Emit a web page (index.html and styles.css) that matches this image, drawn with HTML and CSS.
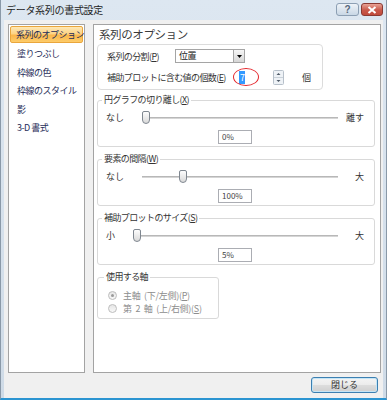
FILE: index.html
```html
<!DOCTYPE html>
<html>

<head>
    <title>データ系列の書式設定</title>
    <meta name="viewport" content="width=device-width, initial-scale=1">
    <link rel="stylesheet" href="styles.css">
</head>

<body>

    <div class="window">
        <div class="titlebar">
            <span class="title">データ系列の書式設定</span>
            <div class="caption-buttons">
                <span class="cap-btn help">?</span>
                <span class="cap-btn close">
                    <svg width="10" height="8" viewBox="0 0 10 8">
                        <path d="M1.5 1 L8.5 7 M8.5 1 L1.5 7" stroke="#fff" stroke-width="2" fill="none" />
                    </svg>
                </span>
            </div>
        </div>

        <div class="content">
            <div class="panels">
                <ul class="nav">
                    <li class="active">系列のオプション</li>
                    <li>塗りつぶし</li>
                    <li>枠線の色</li>
                    <li>枠線のスタイル</li>
                    <li>影</li>
                    <li>3-D 書式</li>
                </ul>

                <div class="options">
                    <h2>系列のオプション</h2>

                    <div class="group">
                        <div class="row">
                            <label class="lbl-split">系列の分割(<u>P</u>)</label>
                            <div class="select">
                                <span class="select-text">位置</span>
                                <span class="select-btn">
                                    <svg width="9" height="12" viewBox="0 0 9 12">
                                        <path d="M2 5 L7 5 L4.5 8 Z" fill="#000" />
                                    </svg>
                                </span>
                            </div>
                        </div>
                        <div class="row">
                            <label class="lbl-count">補助プロットに含む値の個数(<u>E</u>)</label>
                            <div class="spin">
                                <span class="spin-value"><span class="sel">7</span></span>
                                <span class="spin-btns">
                                    <svg width="11" height="15" viewBox="0 0 11 15">
                                        <rect x="0.5" y="0.5" width="10" height="14" rx="1" fill="#eef2f6" stroke="#b7c0ca" />
                                        <line x1="1" y1="7.5" x2="10" y2="7.5" stroke="#c9d1d9" />
                                        <path d="M3.5 5 L7.5 5 L5.5 3 Z" fill="#4d5866" />
                                        <path d="M3.5 10 L7.5 10 L5.5 12 Z" fill="#4d5866" />
                                    </svg>
                                </span>
                                <span class="mark"></span>
                            </div>
                            <span class="unit">個</span>
                        </div>
                    </div>

                    <fieldset class="box">
                        <legend>円グラフの切り離し(<u>X</u>)</legend>
                        <div class="slider-row">
                            <span class="end">なし</span>
                            <div class="track"><span class="thumb" style="left: 0%"></span></div>
                            <span class="end-right">離す</span>
                        </div>
                        <div class="value-box">0%</div>
                    </fieldset>

                    <fieldset class="box">
                        <legend>要素の間隔(<u>W</u>)</legend>
                        <div class="slider-row">
                            <span class="end">なし</span>
                            <div class="track"><span class="thumb" style="left: 19%"></span></div>
                            <span class="end-right">大</span>
                        </div>
                        <div class="value-box">100%</div>
                    </fieldset>

                    <fieldset class="box">
                        <legend>補助プロットのサイズ(<u>S</u>)</legend>
                        <div class="slider-row">
                            <span class="end">小</span>
                            <div class="track"><span class="thumb" style="left: 0%"></span></div>
                            <span class="end-right">大</span>
                        </div>
                        <div class="value-box">5%</div>
                    </fieldset>

                    <fieldset class="box axis">
                        <legend>使用する軸</legend>
                        <div class="radio-row">
                            <span class="radio checked"></span>
                            <span>主軸 (下/左側)(<u>P</u>)</span>
                        </div>
                        <div class="radio-row">
                            <span class="radio"></span>
                            <span>第 2 軸 (上/右側)(<u>S</u>)</span>
                        </div>
                    </fieldset>
                </div>
            </div>

            <div class="footer">
                <button type="button" class="close-button">閉じる</button>
            </div>
        </div>
    </div>

</body>

</html>
```

FILE: styles.css
```css
body {
    margin: 0;
    font-family: "Noto Sans CJK JP", "Noto Sans", sans-serif;
    font-size: 9px;
    color: #333;
}

.window {
    width: 387px;
    height: 400px;
    box-sizing: border-box;
    display: flex;
    flex-direction: column;
    padding: 0 3px;
    background: linear-gradient(#dde7f1, #cfdbe7);
    border-left: 1px solid #8a99a8;
    border-right: 1px solid #8a99a8;
    border-bottom: 2px solid #2b94d1;
}

/* title bar */
.titlebar {
    height: 20px;
    flex-shrink: 0;
    display: flex;
    justify-content: space-between;
}

.title {
    padding-left: 2px;
    line-height: 20px;
    font-size: 10px;
    letter-spacing: -0.3px;
    color: #1e1e1e;
}

.caption-buttons {
    display: flex;
    gap: 2px;
    margin-top: 3px;
}

.cap-btn {
    height: 13px;
    box-sizing: border-box;
    border-radius: 3px;
    display: flex;
    align-items: center;
    justify-content: center;
}

.help {
    width: 23px;
    border: 1px solid #8c9fb3;
    background: linear-gradient(#eef3f8, #c9d7e5);
    color: #56677a;
    font-family: "Liberation Sans", sans-serif;
    font-weight: bold;
    font-size: 10px;
}

.close {
    width: 22px;
    border: 1px solid #8a3a33;
    background: linear-gradient(#e9a396, #c9594a 55%, #c14b3c);
}

/* dialog body */
.content {
    flex: 1;
    display: flex;
    flex-direction: column;
    background: #f0f0f0;
    padding: 4px 2px 0 4px;
}

.panels {
    display: flex;
    gap: 8px;
    height: 349px;
}

.nav {
    width: 77px;
    box-sizing: border-box;
    margin: 0;
    padding: 1px;
    list-style: none;
    background: white;
    border: 1px solid #a3a3a3;
}

.nav li {
    height: 18.6px;
    line-height: 21px;
    padding-left: 7px;
    color: #1f2d58;
    letter-spacing: -0.5px;
    white-space: nowrap;
}

.nav li.active {
    height: 17px;
    line-height: 15px;
    box-sizing: border-box;
    padding-left: 5px;
    border: 1px solid #eaa63c;
    border-radius: 2px;
    background: linear-gradient(#fee8b6, #fdd384 45%, #fbb64a 55%, #fdcc6a);
}

.options {
    flex: 1;
    padding-left: 3px;
    background: white;
    border: 1px solid #a3a3a3;
}

h2 {
    margin: 0;
    padding-left: 2px;
    height: 19px;
    line-height: 19px;
    font-size: 11.5px;
    font-weight: normal;
    letter-spacing: -0.4px;
    color: #3a3a3a;
}

/* top option group */
.group {
    width: 226px;
    height: 46px;
    box-sizing: border-box;
    padding: 4px 0 0 9px;
    border: 1px solid #dcdcdc;
    border-radius: 4px;
    display: flex;
    flex-direction: column;
    gap: 7px;
}

.row {
    display: flex;
    align-items: center;
    height: 14px;
    letter-spacing: -0.6px;
}

.lbl-split {
    width: 68px;
}

.lbl-count {
    width: 128px;
    white-space: nowrap;
}

.select {
    width: 70px;
    height: 14px;
    box-sizing: border-box;
    display: flex;
    border: 1px solid #a5a5a5;
    background: white;
}

.select-text {
    flex: 1;
    padding-left: 3px;
    line-height: 12px;
    color: #222;
}

.select-btn {
    width: 10px;
    display: flex;
    justify-content: center;
    border-left: 1px solid #a5a5a5;
    background: linear-gradient(#f6f6f6, #d6d6d6);
}

.spin {
    position: relative;
    width: 49px;
    height: 15px;
    display: flex;
}

.spin-value {
    flex: 1;
    padding-left: 4px;
    line-height: 15px;
}

.sel {
    background: #3399ff;
    color: white;
    padding: 0 1px;
}

.spin-btns {
    width: 11px;
}

/* red annotation ring drawn over the counter */
.mark {
    position: absolute;
    left: -2px;
    top: -2px;
    width: 26px;
    height: 18px;
    box-sizing: border-box;
    border: 1.5px solid #e4262c;
    border-radius: 50%;
}

.unit {
    margin-left: 18px;
}

/* slider groups */
.box {
    width: 278px;
    box-sizing: border-box;
    margin: 6px 0 0;
    padding: 5px 10px 2px 8px;
    border: 1px solid #d9d9d9;
    border-radius: 3px;
}

.group + .box {
    margin-top: 4px;
}

legend {
    padding: 0 2px;
    margin-left: -4px;
    line-height: 12px;
    letter-spacing: -0.6px;
    color: #333;
}

.slider-row {
    display: flex;
    align-items: center;
    height: 13px;
}

.end {
    margin-right: 18px;
}

.end-right {
    min-width: 22px;
    margin-left: 4px;
    text-align: right;
}

.track {
    flex: 1;
    position: relative;
    height: 13px;
}

.track::before {
    content: "";
    position: absolute;
    left: 0;
    right: 0;
    top: 6px;
    height: 2px;
    background: linear-gradient(#a9a9a9, #e4e4e4);
}

.thumb {
    position: absolute;
    top: 0;
    width: 8px;
    height: 13px;
    box-sizing: border-box;
    border: 1px solid #7f8790;
    border-radius: 2px 2px 4px 4px;
    background: linear-gradient(#fdfdfd, #d9d9d9);
}

.value-box {
    width: 34px;
    height: 14px;
    box-sizing: border-box;
    margin: 6px auto 0;
    padding-left: 3px;
    border: 1px solid #abadb3;
    background: white;
    font-size: 8px;
    line-height: 12px;
    color: #444;
}

/* axis radio group */
.axis {
    width: 122px;
    padding: 6px 4px 3px 10px;
}

.radio-row {
    display: flex;
    align-items: center;
    gap: 6px;
    height: 13px;
    color: #8d8d8d;
    letter-spacing: -0.3px;
    word-spacing: 2px;
    white-space: nowrap;
}

.radio {
    width: 9px;
    height: 9px;
    box-sizing: border-box;
    border: 1px solid #bdbdbd;
    border-radius: 50%;
    background: linear-gradient(#e6e6e6, #f8f8f8);
    display: flex;
    align-items: center;
    justify-content: center;
}

.radio.checked::after {
    content: "";
    width: 3px;
    height: 3px;
    border-radius: 50%;
    background: #9a9a9a;
}

/* footer */
.footer {
    display: flex;
    justify-content: flex-end;
    padding-top: 4px;
}

.close-button {
    width: 67px;
    height: 16px;
    margin-right: 3px;
    padding: 0;
    border: 1px solid #3c7fb1;
    border-radius: 3px;
    background: linear-gradient(#f4f4f4, #ebebeb 50%, #dddddd 50%, #cfcfcf);
    box-shadow: inset 0 0 0 1px #c4e5f6;
    font-family: "Noto Sans CJK JP", sans-serif;
    font-size: 9px;
    line-height: 14px;
    color: #333;
}
```
